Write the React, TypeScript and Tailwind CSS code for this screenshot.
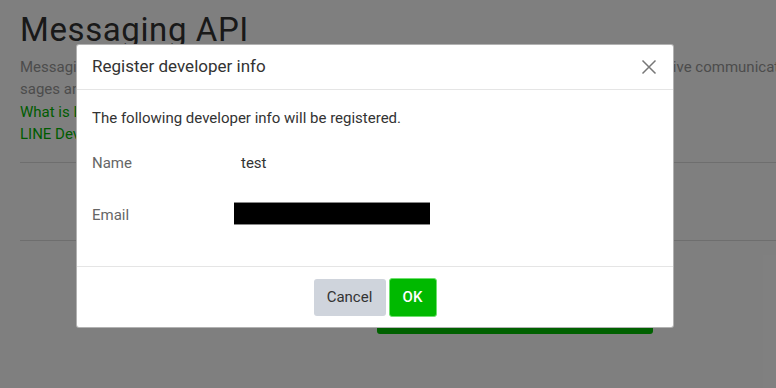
import React from "react";

export default function App() {
  return (
    <div
      className="relative w-[776px] h-[388px] overflow-hidden bg-white"
      style={{ fontFamily: "Roboto, 'Liberation Sans', sans-serif" }}
    >
      {/* underlying page */}
      <div className="pl-5 pt-[10px]">
        <h1 className="text-[33px] leading-[40px] tracking-[0.6px] text-[#333] whitespace-nowrap">Messaging API</h1>
        <div className="mt-[6px] text-[15px] leading-[22px] text-[#999] whitespace-nowrap">
          <p>Messaging API lets your bots deliver richer, personalized experiences and highly engaging, interactive communication with users. Send push mes</p>
          <p>sages and reply messages to friends of your LINE Official Account.</p>
        </div>
        <div className="mt-px text-[15px] leading-[22px] text-[#00b900] whitespace-nowrap">
          <p>What is LINE Messaging API?</p>
          <p>LINE Developers documentation</p>
        </div>
        <div className="mt-[17px] border-t border-[#ddd]" />
        <div className="h-[77px]" />
        <div className="border-t border-[#ddd]" />
        <div className="flex justify-start pl-[357px] pt-[52px]">
          <div className="w-[276px] h-[41px] rounded-[3px] bg-[#00c300]" />
        </div>
      </div>

      {/* overlay */}
      <div className="absolute inset-0 bg-black/50" />

      {/* modal */}
      <div className="absolute left-[76px] top-[44px] w-[598px] h-[284px] rounded-[3px] border border-black/30 bg-white">
        <div className="flex h-[45px] items-center justify-between border-b border-[#e5e5e5] pl-[15px] pr-[16px]">
          <div className="text-[17px] text-[#333]">Register developer info</div>
          <svg width="16" height="16" viewBox="0 0 16 16" className="text-[#777]">
            <path d="M1.5 1.5L14.5 14.5M14.5 1.5L1.5 14.5" stroke="currentColor" strokeWidth="1.5" fill="none" />
          </svg>
        </div>
        <div className="h-[177px] border-b border-[#e5e5e5] pl-[15px] pt-[18px] text-[15px]">
          <div className="leading-[20px] text-[#333]">The following developer info will be registered.</div>
          <div className="mt-[25px] flex items-center h-[20px]">
            <div className="w-[142px] text-[#666]">Name</div>
            <div className="pl-[7px] text-[#333]">test</div>
          </div>
          <div className="mt-[28px] flex items-center h-[24px]">
            <div className="w-[142px] pt-[4px] text-[#666]">Email</div>
            <div className="h-[23px] w-[196px] border-y border-[#888] bg-black" />
          </div>
        </div>
        <div className="flex h-[60px] items-center justify-center gap-[3px]">
          <button className="h-[37px] w-[72px] rounded-[3px] bg-[#cfd4dc] text-[15px] text-[#333]">Cancel</button>
          <button className="h-[39px] w-[48px] rounded-[3px] border border-[#6ee06e] bg-[#00b900] text-[15px] font-medium text-white">OK</button>
        </div>
      </div>
    </div>
  );
}
